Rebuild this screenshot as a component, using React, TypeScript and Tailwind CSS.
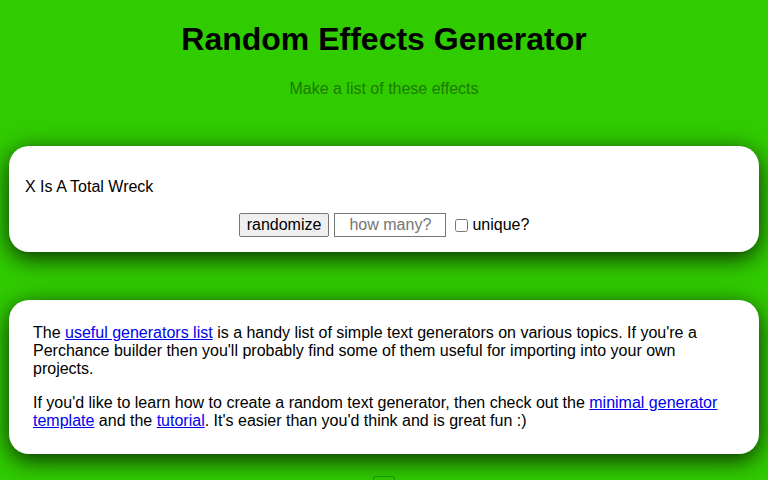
export default function App() {
  return (
    <div className="min-h-screen bg-[#30cc00] font-['Liberation_Sans',Arial,sans-serif] text-black">
      <div className="flex flex-col items-center pt-[21px]">
        <h1 className="text-[32px] leading-[37px] font-bold">Random Effects Generator</h1>
        <p className="mt-[22px] text-base leading-[18px] text-[#1d7a00]">Make a list of these effects</p>
      </div>

      <div className="mx-[9px] mt-[48px] rounded-[20px] bg-white px-4 pt-[32px] pb-[15px] shadow-[0_6px_24px_rgba(0,0,0,0.8)]">
        <div className="text-base leading-[18px]">X Is A Total Wreck</div>
        <div className="mt-[17px] flex items-center justify-center text-base">
          <button
            type="button"
            className="h-6 rounded-[2px] border border-[#767676] bg-[#efefef] px-[7px] leading-[18px]"
          >
            randomize
          </button>
          <input
            placeholder="how many?"
            className="ml-[5px] h-6 w-[112px] border border-[#767676] px-1 text-center leading-[18px] placeholder:text-[#757575]"
          />
          <input type="checkbox" className="ml-[9px] h-[13px] w-[13px]" />
          <span className="ml-[4px] leading-[18px]">unique?</span>
        </div>
      </div>

      <div className="mx-[9px] mt-[48px] rounded-[20px] bg-white px-6 pt-[24px] pb-[24px] text-base leading-[18px] shadow-[0_6px_24px_rgba(0,0,0,0.8)]">
        <p>
          The{" "}
          <a href="#" className="text-[#0000ee] underline">
            useful generators list
          </a>{" "}
          is a handy list of simple text generators on various topics. If you're a Perchance builder then you'll probably
          find some of them useful for importing into your own projects.
        </p>
        <p className="mt-4">
          If you'd like to learn how to create a random text generator, then check out the{" "}
          <a href="#" className="text-[#0000ee] underline">
            minimal generator template
          </a>{" "}
          and the{" "}
          <a href="#" className="text-[#0000ee] underline">
            tutorial
          </a>
          . It's easier than you'd think and is great fun :)
        </p>
      </div>

      <div className="mt-[22px] flex justify-center pb-4">
        <div className="h-6 w-[22px] rounded-[3px] border border-[rgba(0,0,0,0.25)]" />
      </div>
    </div>
  );
}
